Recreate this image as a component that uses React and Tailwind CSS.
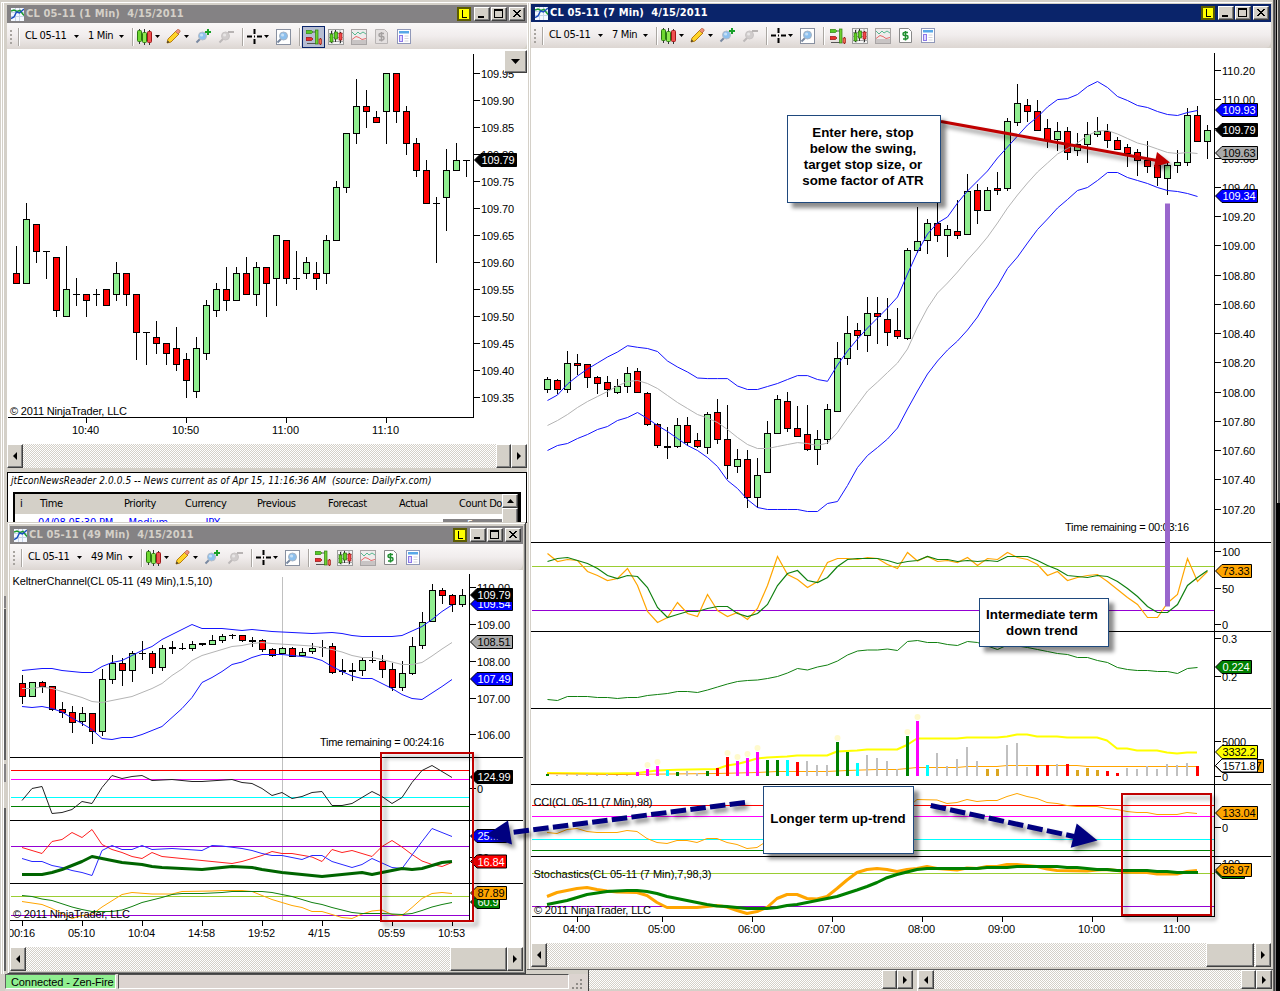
import React from 'react';

const UP = '#90ee90';
const DOWN = '#ff0000';

// [high, body top, body bottom, low, kind]
const CANDLES_1 = [
    [246, 273, 284, 284, 'r'], [203, 219, 284, 284, 'g'], [224, 224, 252, 263, 'r'], [251, 251, 252, 279, 'd'], [257, 257, 311, 317, 'r'],
    [246, 289, 317, 317, 'g'], [278, 294, 295, 306, 'd'], [294, 294, 301, 317, 'r'], [289, 294, 295, 306, 'd'], [289, 289, 306, 306, 'r'],
    [262, 273, 295, 301, 'g'], [273, 273, 295, 306, 'r'], [294, 294, 333, 360, 'r'], [332, 332, 333, 365, 'd'], [321, 337, 344, 354, 'r'],
    [343, 343, 354, 365, 'r'], [327, 348, 365, 371, 'r'], [353, 359, 381, 398, 'r'], [337, 348, 392, 398, 'g'], [300, 305, 354, 360, 'g'],
    [283, 289, 311, 317, 'g'], [267, 289, 301, 311, 'r'], [267, 273, 301, 301, 'g'], [257, 273, 295, 295, 'r'], [262, 267, 295, 306, 'g'],
    [267, 267, 284, 317, 'r'], [235, 235, 279, 306, 'g'], [240, 240, 279, 284, 'r'], [251, 278, 279, 290, 'd'], [257, 262, 274, 279, 'g'],
    [262, 273, 279, 290, 'r'], [235, 240, 274, 284, 'g'], [181, 187, 241, 241, 'g'], [133, 133, 188, 193, 'g'], [79, 106, 134, 144, 'g'],
    [90, 106, 112, 128, 'r'], [111, 117, 123, 123, 'r'], [73, 73, 112, 144, 'g'], [73, 73, 112, 123, 'r'], [106, 111, 144, 155, 'r'],
    [138, 143, 171, 177, 'r'], [160, 170, 204, 204, 'r'], [197, 203, 204, 263, 'd'], [149, 170, 198, 231, 'g'], [143, 160, 171, 171, 'g'],
    [160, 160, 161, 177, 'd'],
];

const CANDLES_7 = [
    [377, 379, 390, 393, 'g'], [379, 380, 390, 394, 'r'], [351, 363, 390, 393, 'g'], [354, 363, 366, 375, 'r'], [364, 364, 378, 388, 'r'],
    [376, 377, 384, 394, 'r'], [376, 382, 390, 397, 'r'], [379, 386, 393, 394, 'g'], [367, 373, 387, 393, 'g'], [368, 371, 393, 393, 'r'],
    [392, 393, 425, 426, 'r'], [423, 424, 446, 448, 'r'], [427, 446, 448, 459, 'd'], [418, 425, 447, 448, 'g'], [417, 425, 443, 446, 'r'],
    [433, 440, 447, 448, 'r'], [412, 414, 448, 454, 'g'], [399, 412, 440, 444, 'r'], [405, 439, 466, 479, 'r'], [449, 459, 467, 473, 'g'],
    [450, 459, 498, 508, 'r'], [458, 475, 498, 508, 'g'], [421, 433, 473, 473, 'g'], [395, 399, 434, 434, 'g'], [392, 401, 429, 432, 'r'],
    [406, 428, 437, 437, 'r'], [405, 434, 450, 451, 'r'], [430, 439, 450, 465, 'g'], [404, 409, 440, 444, 'g'], [342, 358, 412, 412, 'g'],
    [316, 333, 359, 365, 'g'], [323, 330, 336, 350, 'r'], [297, 313, 336, 352, 'g'], [297, 313, 317, 344, 'r'], [298, 319, 333, 346, 'r'],
    [308, 330, 337, 339, 'r'], [248, 250, 339, 340, 'g'], [207, 241, 251, 253, 'g'], [219, 223, 241, 254, 'g'], [195, 223, 236, 242, 'r'],
    [225, 229, 236, 257, 'g'], [200, 231, 236, 239, 'r'], [174, 191, 235, 235, 'g'], [184, 190, 211, 224, 'r'], [187, 190, 211, 211, 'g'],
    [172, 188, 191, 195, 'r'], [118, 121, 189, 191, 'g'], [84, 103, 123, 126, 'g'], [99, 105, 112, 122, 'r'], [100, 111, 131, 131, 'r'],
    [119, 128, 141, 148, 'r'], [122, 131, 140, 151, 'g'], [127, 131, 153, 160, 'r'], [133, 144, 151, 156, 'g'], [122, 134, 145, 163, 'g'],
    [117, 131, 135, 137, 'g'], [124, 131, 141, 148, 'r'], [137, 140, 150, 150, 'r'], [144, 147, 154, 167, 'r'], [149, 152, 161, 176, 'r'],
    [141, 160, 167, 173, 'r'], [165, 165, 178, 186, 'r'], [163, 165, 179, 195, 'g'], [150, 162, 166, 173, 'g'], [108, 115, 163, 166, 'g'],
    [106, 115, 142, 142, 'r'], [125, 130, 142, 159, 'g'],
];

const CANDLES_49 = [
    [675, 683, 697, 704, 'r'], [682, 682, 697, 697, 'g'], [681, 682, 687, 693, 'r'], [686, 686, 710, 711, 'r'], [702, 709, 713, 718, 'r'],
    [706, 712, 723, 733, 'r'], [707, 713, 722, 726, 'g'], [713, 713, 732, 744, 'r'], [669, 679, 732, 736, 'g'], [655, 663, 680, 684, 'g'],
    [658, 663, 671, 686, 'r'], [651, 653, 671, 682, 'g'], [641, 653, 654, 660, 'd'], [651, 653, 668, 674, 'r'], [645, 648, 668, 671, 'g'],
    [641, 647, 649, 654, 'd'], [643, 648, 649, 650, 'd'], [641, 644, 649, 651, 'g'], [643, 643, 645, 646, 'd'], [635, 640, 645, 645, 'g'],
    [634, 636, 641, 643, 'g'], [634, 635, 636, 639, 'd'], [635, 635, 641, 642, 'r'], [637, 640, 642, 647, 'd'], [639, 640, 650, 652, 'r'],
    [648, 649, 656, 657, 'r'], [647, 648, 654, 654, 'g'], [647, 648, 657, 657, 'r'], [648, 652, 656, 656, 'g'], [643, 648, 652, 654, 'g'],
    [640, 647, 648, 657, 'd'], [643, 646, 673, 674, 'r'], [659, 670, 672, 675, 'd'], [663, 670, 672, 681, 'd'], [658, 660, 671, 676, 'g'],
    [651, 660, 661, 663, 'd'], [655, 661, 670, 678, 'r'], [663, 669, 688, 691, 'r'], [661, 673, 688, 691, 'g'], [637, 646, 674, 675, 'g'],
    [612, 622, 646, 649, 'g'], [584, 590, 622, 622, 'g'], [588, 590, 596, 604, 'r'], [594, 595, 605, 612, 'r'], [589, 595, 605, 607, 'g'],
];

const G = '#008000', M = '#ff00ff', C = '#00ffff', R = '#ff0000', S = '#c0c0c0', O = '#daa520';

// [top y, color], one for each bar
const VOLUME = [
    [774, G], [775, S], [774, S], [774, S], [774, S], [775, S], [774, S], [775, S], [775, S], [772, M], [769, M], [766, M], [770, C], [772, G],
    [771, S], [773, S], [771, G], [768, R], [757, R], [761, M], [758, M], [752, M], [760, G], [760, G], [760, C], [762, R], [761, S], [765, S],
    [765, S], [742, G], [752, G], [763, C], [755, S], [758, S], [761, S], [769, S], [736, G], [721, M], [765, C], [753, S], [766, S], [759, S],
    [747, S], [761, S], [769, O], [769, O], [745, S], [743, S], [767, S], [765, R], [765, R], [764, S], [764, R], [770, O], [768, O], [770, O],
    [771, R], [773, R], [768, S], [769, S], [766, S], [769, S], [764, S], [765, S], [763, S], [766, R],
];
const VOLUME_DOTS = [10, 11, 18, 19, 20, 21, 29, 36, 37];

const K7_UP = [400.5, 395, 384, 376, 369, 363, 357, 352, 345.7, 347.3, 348.5, 351.5, 361, 367, 372, 378, 378.6, 378.6, 378.6, 386, 389.5, 389.5, 386.5, 383.5, 379.5, 375.6, 375.6, 379.5, 381.3, 365, 351, 339, 328, 318, 308, 297, 274, 252, 234, 223, 217, 203, 191, 181, 171, 158, 147, 136, 125, 117, 107, 99.6, 98.6, 94.5, 86.5, 81.5, 87.5, 96.5, 100.5, 105.5, 107.5, 111.5, 114.5, 115.5, 112.5, 110.5];
const K7_MID = [425.5, 420.5, 414.5, 407.5, 401.5, 396.5, 391.5, 386, 381.5, 380.5, 383.5, 388.5, 395.5, 402.5, 408.5, 414.5, 418, 422.5, 429.5, 437.5, 444.5, 448.5, 448.5, 446.5, 444.5, 442.6, 443.5, 445.5, 443, 432.5, 418, 404.5, 391, 382, 372.5, 363, 349, 327, 308, 293, 283, 272, 260, 249, 237, 223, 208, 195, 183, 172, 163, 154, 148.5, 143, 135.5, 131, 130.5, 134, 138.5, 143, 145.5, 149, 152.5, 153.5, 152.5, 153.5];
const K7_LOW = [450.5, 445.5, 443.5, 438.5, 434.5, 429.5, 426.5, 420.5, 417.5, 412.5, 418.5, 425.5, 431.5, 438.5, 445.5, 450.5, 457.5, 466.5, 480.5, 488.5, 499.5, 507.5, 509.5, 509.5, 509.5, 509.5, 511.5, 511.5, 503.5, 501.5, 485.5, 467.5, 455.5, 447.5, 439, 428, 409, 391, 374, 361, 350, 341, 330, 317, 300, 286, 268.5, 257, 243, 229.5, 219, 208, 199.5, 190.5, 187.5, 180.5, 172.5, 172.5, 177.5, 180.5, 183.5, 187.5, 190.5, 191.5, 193.5, 196.5];
const ST7_K = [553.5, 561.5, 559.5, 560.5, 571.5, 575.5, 580.5, 578.5, 568.5, 585.5, 611.5, 622.5, 617.5, 602.5, 613.5, 616.5, 594.5, 610.5, 616.5, 612.5, 619.5, 608.5, 585.5, 556.5, 574.5, 579.5, 587.5, 581.5, 562.5, 558.5, 558.5, 559.5, 557.5, 558.5, 564.5, 568.5, 552.5, 561, 556.5, 561.5, 560.5, 562.5, 557.5, 565.5, 558.5, 559.5, 552.5, 557.5, 559.5, 564.5, 575.5, 571.5, 580.5, 577.5, 575.5, 574.5, 581.5, 589.5, 597.5, 604.5, 617.5, 617.5, 603, 594.5, 558.5, 581.5, 571.5];
const ST7_D = [561.5, 558.5, 557.5, 560.5, 563.5, 568.5, 575.5, 578.5, 575.5, 576.5, 587.5, 607.5, 617.5, 614.5, 611.5, 611.5, 608.5, 606.5, 606.5, 613.5, 616.5, 613.5, 604.5, 585.5, 573.5, 570.5, 580.5, 582.5, 577.5, 566.5, 559.5, 558.5, 558.5, 558.5, 560.5, 563.5, 561.5, 560.5, 556.5, 559.5, 559.5, 561.5, 560.5, 561.5, 560.5, 561.5, 556.5, 556.5, 556.5, 560.5, 565.5, 569.5, 575.5, 576.5, 577.5, 575.5, 576.5, 581.5, 588.5, 596.5, 606.5, 612.5, 612.5, 604.5, 585.5, 577.5, 570.5];
const ATR7 = [699.5, 700.5, 696.5, 696.5, 696.5, 697.5, 697.5, 698.5, 697.5, 697.5, 695.5, 694.5, 693.5, 691.5, 691.5, 692.5, 690, 687, 684, 681.5, 680.5, 680, 678.5, 676.5, 673, 668.5, 670, 667, 665, 661, 655, 651, 650, 650, 649, 650.5, 641.5, 640.5, 642.5, 642.5, 644.5, 645.5, 641.5, 642.5, 646, 649.5, 645, 646, 647.5, 649.5, 651.5, 653.5, 654.5, 657.5, 657.5, 660.5, 662.5, 667.5, 669.5, 670.5, 670.5, 671.5, 671.5, 673.5, 668.5, 667.5];

function Candles({ x, data }) {
    return data.map(([hi, top, bottom, lo, kind], i) => {
        const c = x + i * 10;
        return (
            <g key={i} shapeRendering="crispEdges">
                <rect x={c} y={hi} width="1" height={lo - hi} />
                {kind === 'd' ? (
                    <rect x={c - 3} y={top} width="7" height={bottom - top} />
                ) : (
                    <rect x={c - 2.5} y={top + 0.5} width="6" height={bottom - top - 1} fill={kind === 'g' ? UP : DOWN} stroke="#000" />
                )}
            </g>
        );
    });
}

function Series({ x, ys, color, w = 1 }) {
    const points = ys.map((y, i) => `${x + i * 10 + 0.5},${y}`).join(' ');
    return <polyline points={points} fill="none" stroke={color} strokeWidth={w} />;
}

function Poly({ p, color, w = 1 }) {
    return <polyline points={p} fill="none" stroke={color} strokeWidth={w} strokeLinejoin="round" />;
}

function H({ x, to, y, color = '#000' }) {
    return <rect x={x} y={y} width={to - x} height="1" fill={color} shapeRendering="crispEdges" />;
}

function V({ x, y, to, color = '#000' }) {
    return <rect x={x} y={y} width="1" height={to - y} fill={color} shapeRendering="crispEdges" />;
}

// y is the middle of the text
function T({ x, y, w, children, fill = '#000' }) {
    return <text x={x} y={y + 4} textLength={w} fill={fill}>{children}</text>;
}

function Tick({ x, y, children, w }) {
    return (
        <>
            <H x={x} to={x + 6} y={y} />
            <T x={x + 7} y={y + 0.5} w={w}>{children}</T>
        </>
    );
}

function Tag({ x, y, right, fill, color = '#fff', children, w }) {
    return (
        <>
            <polygon points={`${x},${y} ${x + 6.5},${y - 6.5} ${right},${y - 6.5} ${right},${y + 6.5} ${x + 6.5},${y + 6.5}`} fill={fill} stroke="#000" />
            <T x={x + 7} y={y} w={w} fill={color}>{children}</T>
        </>
    );
}

function TimeAxis({ y, items, w = 27 }) {
    return items.map(([x, label]) => (
        <g key={label}>
            <V x={x} y={y} to={y + 6} />
            <T x={x - 14} y={y + 13} w={label.length < 5 ? 22 : w}>{label}</T>
        </g>
    ));
}

function Chart({ box, children }) {
    const [x, y, w, h] = box;
    return (
        <svg className="block shrink-0 bg-white font-['Liberation_Sans',sans-serif] text-[11px]" width={w} height={h} viewBox={`${x} ${y} ${w} ${h}`}>
            {children}
        </svg>
    );
}

function ChartIcon() {
    return (
        <svg width="13" height="13" viewBox="0 0 13 13" className="shrink-0">
            <rect width="13" height="13" fill="#f4f8ff" />
            <path d="M0 4.5h13M0 8.5h13M4.5 0v13M8.5 0v13" stroke="#c8d4e8" />
            <path d="M0 3l3-1 3 1.500 3-1 4 5" stroke="#1a9c30" strokeWidth="1.5" fill="none" />
            <path d="M0 10.500l3-1.500 2.500-5 3 1L13 1" stroke="#1c50c0" strokeWidth="1.5" fill="none" />
        </svg>
    );
}

const raised = 'border border-t-white border-l-white border-r-[#404040] border-b-[#404040] bg-[#d4d0c8] shadow-[inset_-1px_-1px_0_#808080]';

function TitleButton({ children, className = '' }) {
    return (
        <span className={`block h-[14px] w-4 ${raised} ${className}`}>
            <svg width="14" height="12" viewBox="0 0 14 12" shapeRendering="crispEdges">{children}</svg>
        </span>
    );
}

function TitleBar({ title, active }) {
    return (
        <div className={`flex h-[18px] shrink-0 items-center pl-1 pr-0.5 ${active ? 'bg-[#0a246a] text-white' : 'bg-[#848284] text-[#d4d0c8]'}`}>
            <ChartIcon />
            <span className="ml-[2px] whitespace-pre font-['DejaVu_Sans_Condensed','DejaVu_Sans',sans-serif] text-[11px] font-bold leading-[18px] tracking-[0.14px] [font-stretch:condensed]">{title}</span>
            <span className="ml-auto mr-[3px] flex h-[14px] w-[14px] items-center justify-center border-2 border-[#5c5c00] bg-[#ffff00]">
                <svg width="6" height="8" viewBox="0 0 6 8"><path d="M1 0v7.5h5" stroke="#000" fill="none" shapeRendering="crispEdges" /></svg>
            </span>
            <TitleButton><rect x="3" y="8" width="6" height="2" /></TitleButton>
            <TitleButton className="ml-px"><path d="M2.5 1.5h8v8h-8zM2.5 2.5h8" fill="none" stroke="#000" /></TitleButton>
            <TitleButton className="ml-0.5"><path d="M3 2h2v1h1v1h2v-1h1v-1h2v1h-1v1h-1v1h-1v1h1v1h1v1h1v1h-2v-1h-1v-1h-2v1h-1v1h-2v-1h1v-1h1v-1h1v-1h-1v-1h-1v-1h-1z" /></TitleButton>
        </div>
    );
}

function Caret({ className }) {
    return <svg width="5" height="3" viewBox="0 0 5 3" className={`shrink-0 ${className}`}><path d="M0 0h5L2.5 3z" /></svg>;
}

function Sep({ className }) {
    return <span className={`h-[18px] w-0.5 shrink-0 border-l border-[#aaa6a2] border-r border-r-white ${className}`} />;
}

function Lens({ fill, rim, handle }) {
    return (
        <>
            <path d="M5.5 9.5L1.5 13.5" stroke={handle} strokeWidth="2" />
            <circle cx="7.5" cy="7" r="4" fill={fill} stroke={rim} />
            <circle cx="6.6" cy="6" r="1.6" fill="#fff" opacity="0.5" />
        </>
    );
}

function Toolbar({ period, wide, pressed }) {
    return (
        <div className="flex h-[26px] shrink-0 items-center rounded-br-md bg-linear-to-b from-[#faf8f8] via-[#f1eded] to-[#dcd6d2] pt-px font-['DejaVu_Sans_Condensed','DejaVu_Sans',sans-serif] text-[11px] [font-stretch:condensed]">
            <svg width="2" height="14" viewBox="0 0 2 14" className="ml-[3px] shrink-0"><path d="M0 1h2M0 5h2M0 9h2M0 13h2" stroke="#a8a4a0" strokeWidth="2" /></svg>
            <Sep className="ml-[6px]" />
            <span className="ml-[5px] w-[43px] shrink-0 whitespace-nowrap tracking-[-0.35px]">CL 05-11</span>
            <Caret className="ml-[6px]" />
            <span className={`ml-[9px] shrink-0 whitespace-nowrap tracking-[-0.35px] ${wide ? 'w-[31px]' : 'w-[25px]'}`}>{period}</span>
            <Caret className="ml-[6px]" />
            <Sep className="ml-2" />
            <svg width="15" height="16" viewBox="0 0 15 16" className="ml-[3px] shrink-0">
                <path d="M2.5 0v15M7.5 0v16M12.5 1v15" stroke="#333" />
                <rect x="0.5" y="1.5" width="4" height="11" rx="1" fill="#6ed830" stroke="#2c7a12" />
                <rect x="5.5" y="3.5" width="4" height="10" rx="1" fill="#8ee850" stroke="#2c7a12" />
                <rect x="10.5" y="2.5" width="4" height="11" rx="1" fill="#f05050" stroke="#a01818" />
            </svg>
            <Caret className="ml-[3px]" />
            <svg width="15" height="15" viewBox="0 0 15 15" className="ml-[6px] shrink-0">
                <path d="M1 14l1-4 8-8 3 3-8 8z" fill="#ffd428" stroke="#b87c10" />
                <path d="M9.5 2.5l2-2q1-.5 2 .5t.5 2l-2 2z" fill="#f09078" stroke="#b06040" strokeWidth="0.7" />
                <path d="M1 14l.7-2.6 1.8 1.8z" fill="#333" />
            </svg>
            <Caret className="ml-[3px]" />
            <svg width="16" height="16" viewBox="0 0 16 16" className="ml-[6px] shrink-0">
                <Lens fill="#8cc0ee" rim="#b4bcc8" handle="#7888a0" />
                <path d="M13 0v6M10 3h6" stroke="#18a028" strokeWidth="2" />
            </svg>
            <svg width="16" height="16" viewBox="0 0 16 16" className="ml-[7px] shrink-0">
                <Lens fill="#d0cccc" rim="#c8c4c4" handle="#bcb8b8" />
                <path d="M10 3h6" stroke="#b8b4b4" strokeWidth="2" />
            </svg>
            <Sep className="ml-[8px]" />
            <svg width="15" height="15" viewBox="0 0 15 15" className="ml-[3px] shrink-0"><path d="M7.5 0v5M7.5 10v5M0 7.5h5M10 7.5h5M7 7.5h1" stroke="#000" strokeWidth="2" /></svg>
            <Caret className="ml-[2px]" />
            <svg width="15" height="16" viewBox="0 0 15 16" className="ml-[7px] shrink-0">
                <rect x="0.5" y="0.5" width="14" height="15" fill="#fff" stroke="#8890a0" />
                <Lens fill="#8cc0ee" rim="#a8b4c4" handle="#7888a0" />
            </svg>
            <Sep className="ml-[8px]" />
            <span className={`ml-px flex h-[22px] w-[23px] shrink-0 items-center justify-center border ${pressed ? 'border-[#0a246a] bg-[#b6bdd2]' : 'border-transparent'}`}>
                <svg width="16" height="16" viewBox="0 0 16 16">
                    <path d="M0 1.500h5.500l1.500 1.500-1.500 1.500H0z" fill="#58c828" stroke="#2c8010" strokeWidth="0.7" />
                    <path d="M0 8.500h5.500l1.500 1.500-1.500 1.500H0z" fill="#e83030" stroke="#901010" strokeWidth="0.7" />
                    <path d="M7 3h3M1 14.500h9" stroke="#555" />
                    <path d="M14.500 9v7" stroke="#802020" />
                    <rect x="9.500" y="1" width="2.500" height="14" fill="#70d030" stroke="#2c8010" strokeWidth="0.7" />
                    <rect x="13" y="10" width="2.500" height="5" fill="#f07050" stroke="#a02020" strokeWidth="0.7" />
                </svg>
            </span>
            <svg width="16" height="16" viewBox="0 0 16 16" className="ml-[3px] shrink-0">
                <rect x="0.5" y="0.5" width="15" height="15" fill="#f4f4f4" stroke="#9c9c9c" />
                <path d="M0 4.500h16M0 8.500h16M0 12.500h16M4 0v16M12 0v16" stroke="#a8a8a8" />
                <path d="M3.500 2v12M7.500 1v12M12.500 3v11" stroke="#333" />
                <rect x="2" y="5" width="3" height="8" fill="#60d020" stroke="#2c7010" strokeWidth="0.7" />
                <rect x="6.500" y="3" width="3" height="7" fill="#60d020" stroke="#2c7010" strokeWidth="0.7" />
                <rect x="11" y="4" width="3" height="7" fill="#f04848" stroke="#a01818" strokeWidth="0.7" />
            </svg>
            <svg width="16" height="16" viewBox="0 0 16 16" className="ml-[7px] shrink-0">
                <rect x="0.5" y="0.5" width="15" height="15" fill="#eeecec" stroke="#a8a4a4" />
                <path d="M1 11h14v4H1z" fill="#c8c4c4" />
                <path d="M1 3l3 3 3-3 2 2 3-2 3 2" fill="none" stroke="#58b890" />
                <path d="M1 10.500l4-3 3 1 3 2 4-1" fill="none" stroke="#e86868" />
            </svg>
            <svg width="13" height="15" viewBox="0 0 13 15" className="ml-[8px] shrink-0">
                <path d="M.5.500h9l3 3v11H.5z" fill={pressed ? '#e4e0e0' : '#fff'} stroke={pressed ? '#b8b4b4' : '#888'} />
                <path d="M9 4.500H5.500Q4 4.500 4 6t1.500 1.500h2Q9 7.500 9 9.200T7.500 11H4M6.500 3v9.500" fill="none" stroke={pressed ? '#a4a0a0' : '#209030'} strokeWidth="1.5" />
            </svg>
            <svg width="14" height="15" viewBox="0 0 14 15" className="ml-[9px] shrink-0">
                <rect x="0.5" y="0.5" width="13" height="14" fill="#fff" stroke="#9098b8" />
                <rect x="2" y="2" width="10" height="2.500" fill="#58a8e8" />
                <rect x="2.500" y="6.500" width="3" height="6" fill="#e0d8ff" stroke="#8c78e8" />
                <path d="M7.500 7h4M7.500 9.500h4M7.500 12h4" stroke="#d4d4dc" />
            </svg>
        </div>
    );
}

const checker = 'bg-[conic-gradient(#fff_25%,#d4d0c8_0_50%,#fff_0_75%,#d4d0c8_0)] bg-[length:2px_2px]';

function Arrow({ d }) {
    return <svg width="8" height="8" viewBox="0 0 8 8"><path d={d} /></svg>;
}

function ScrollBar({ thumb, gap = '', height = 'h-6' }) {
    return (
        <div className={`flex shrink-0 ${height} ${checker}`}>
            <span className={`flex w-4 items-center justify-center ${raised}`}><Arrow d="M6 0v8L2 4z" /></span>
            <span className={`ml-auto ${thumb} ${raised}`} />
            <span className={`flex w-4 items-center justify-center ${raised} ${gap}`}><Arrow d="M2 0v8L6 4z" /></span>
        </div>
    );
}

function OneMinute() {
    return (
        <div className="absolute left-[7px] top-[5px] flex w-[520px] flex-col">
            <TitleBar title="CL 05-11 (1 Min)  4/15/2011" />
            <Toolbar period="1 Min" pressed />
            <Chart box={[7, 49, 520, 395]}>
                <Candles x={16} data={CANDLES_1} />
                <V x={473} y={54} to={418} />
                <H x={8} to={474} y={417} />
                {['109.95', '109.90', '109.85', '109.80', '109.75', '109.70', '109.65', '109.60', '109.55', '109.50', '109.45', '109.40', '109.35'].map((p, i) => (
                    <Tick key={p} x={474} y={73 + i * 27} w={33}>{p}</Tick>
                ))}
                <Tag x={474.5} y={160} right={516.5} fill="#000" w={33}>109.79</Tag>
                <TimeAxis y={417} items={[[86, '10:40'], [186, '10:50'], [286, '11:00'], [386, '11:10']]} />
                <T x={10} y={411} w={117}>© 2011 NinjaTrader, LLC</T>
            </Chart>
            <ScrollBar thumb="w-[15px]" />
            <span className={`absolute right-0 top-[45px] flex h-[23px] w-[23px] items-center justify-center ${raised}`}>
                <svg width="9" height="5" viewBox="0 0 9 5"><path d="M0 0h9L4.500 5z" /></svg>
            </span>
        </div>
    );
}

function News() {
    return (
        <div className="absolute left-[7px] top-[472px] h-[51px] w-[520px] overflow-hidden border border-black bg-white font-['DejaVu_Sans_Condensed','DejaVu_Sans',sans-serif] text-[11px] [font-stretch:condensed]">
            <p className="h-[19px] whitespace-pre pl-[3px] text-[10px] italic leading-[16px] tracking-[0.06px]">jtEconNewsReader 2.0.0.5 -- News current as of Apr 15, 11:16:36 AM  (source: DailyFx.com)</p>
            <div className="ml-[5px] flex h-10 w-[508px] border-2 border-r-[3px] border-black">
                <div className="flex-1 overflow-hidden">
                    <div className="grid h-5 w-[520px] grid-cols-[20px_84px_61px_72px_71px_71px_60px_81px] items-center whitespace-nowrap bg-[#d4d0c8] pl-[5px] tracking-[-0.4px]">
                        <span>i</span><span>Time</span><span>Priority</span><span>Currency</span><span>Previous</span><span>Forecast</span><span>Actual</span><span>Count Down</span>
                    </div>
                    <div className="flex whitespace-nowrap pt-px text-[#0000ff]">
                        <span className="ml-[23px] w-[93px] tracking-[-0.2px]">04/08 05:30 PM</span>
                        <span className="w-[79px]">Medium</span>
                        <span className="w-[244px]">JPY</span>
                        <span className="mt-1 h-4 w-[60px] bg-[#848284] pl-6 leading-[11px] text-white">5</span>
                    </div>
                </div>
                <div className={`flex w-4 flex-col ${checker}`}>
                    <span className={`flex h-[15px] items-center justify-center ${raised}`}><svg width="7" height="4" viewBox="0 0 7 4"><path d="M0 4h7L3.500 0z" /></svg></span>
                    <span className={`h-6 ${raised}`} />
                </div>
            </div>
        </div>
    );
}

function FortyNineMinute() {
    return (
        <div className="absolute left-[7px] top-[522px] flex w-[519px] flex-col border border-b-[#404040] border-l-[#d4d0c8] border-r-[#404040] border-t-[#d4d0c8] bg-[#d4d0c8] px-0.5 pb-0.5 pt-[3px] shadow-[inset_1px_1px_0_#fff,inset_-1px_-1px_0_#808080]">
            <TitleBar title="CL 05-11 (49 Min)  4/15/2011" />
            <Toolbar period="49 Min" wide />
            <Chart box={[10, 570, 513, 377]}>
                <V x={282} y={577} to={920} color="#c0c0c0" />
                <Candles x={22} data={CANDLES_49} />
                <Poly color="#1414ff" p="22,670.5 32,669.5 42,668.5 52,668.5 62,670.5 72,671.5 82,672.5 92,672.5 102,666.5 112,662.5 122,660.5 132,655.5 142,650.5 152,646.5 162,639.5 172,634.5 182,629.5 192,624.5 202,628.5 222,628.5 232,629.5 242,630.5 252,629.5 262,630.5 272,631.5 312,633.5 332,632.5 342,633.5 352,635.5 362,636.5 392,636.5 402,635.5 412,631 422,626.5 432,619.5 442,611.5 452,605" />
                <Poly color="#b4b4b4" p="22,688.5 32,688.5 42,687 52,688.5 62,691.5 72,694.5 82,697.5 92,701.5 102,702.5 112,700.5 132,696.5 142,692.5 152,688.5 162,683.5 172,675.5 182,669 192,660.5 202,655.5 212,652.5 222,649.5 232,646.5 242,645.5 252,643.5 262,642.5 272,643.5 312,646 322,647.5 332,649.5 342,652 352,655.5 362,657.5 372,657.5 382,659.5 402,664.5 412,664.5 422,662.5 432,656 442,649 452,642.5" />
                <Poly color="#1414ff" p="22,706.5 32,707.5 42,706.5 52,708.5 62,712 72,718 82,723.5 92,729.5 102,738.5 112,739.5 122,737.5 132,737.5 142,734.5 152,730.5 162,726.5 172,717.5 182,708.5 192,697.5 202,682.5 212,677.5 222,671.5 232,664.5 242,662 252,657.5 262,654.5 282,654.5 312,657.5 322,660.5 332,666.5 342,671.5 352,676 362,678.5 372,678.5 382,683.5 392,688.5 402,694.5 412,698.5 422,699.5 432,693 442,686.5 452,679.5" />
                <H x={10} to={523} y={757} />
                <H x={11} to={469} y={770} color="#ff0000" />
                <H x={11} to={469} y={779} color="#ff00ff" />
                <H x={11} to={469} y={797} color="#00ffff" />
                <H x={11} to={469} y={806} color="#008000" />
                <Poly color="#222" p="22,800.5 32,788.5 42,786.5 52,813.5 62,812.5 72,809.5 82,801.5 92,803.5 102,787.5 112,775.5 122,778.5 132,776.5 142,775.5 152,780.5 172,779.5 192,781.5 202,781.5 232,779.5 242,782.5 252,783.5 262,788.5 272,795.5 282,792.5 292,798.5 302,796.5 312,792.5 322,791.5 332,805.5 342,805.5 352,803.5 372,791.5 382,796.5 392,803.5 402,797.5 412,782.5 422,770.5 432,765.5 442,771.5 452,777.5" />
                <H x={10} to={523} y={820} />
                <H x={11} to={469} y={846} color="#9400d3" />
                <Poly color="#ff2020" p="22,847.5 42,853.5 52,841.5 62,839.5 72,832.5 82,837.5 92,829.5 102,844.5 112,849.5 122,852.5 132,856.5 142,858.5 152,852.5 162,856.5 192,859.5 232,863.5 242,861.5 252,858.5 262,855.5 272,851.5 282,853.5 292,853.5 312,857 322,861.5 332,849.5 342,852.5 352,850.5 372,856.5 382,846.5 392,840.5 402,847 412,854.5 422,861 432,864.5 442,866.5 452,862.5" />
                <Poly color="#2828ff" p="22,858.5 32,861.5 42,861.5 52,865.5 62,867.5 72,870.5 82,872.5 92,875.5 102,850.5 112,845.5 122,849.5 132,849.5 142,845.5 152,849.5 172,848.5 202,850.5 212,845.5 222,846 242,848.5 252,850.5 262,853.5 272,855.5 282,855.5 302,859.5 312,855.5 322,855.5 332,861.5 342,864.5 352,867.5 362,864.5 372,858.5 392,867.5 402,868.5 412,855 422,841.5 432,828.5 452,836.5" />
                <Poly color="#006400" w={3} p="22,874.5 42,874.5 52,872.5 62,869.5 82,861.5 92,856.5 102,858.5 122,862.5 142,864.5 152,866.5 162,867.5 182,868.5 202,869.5 222,867.5 232,866.5 252,867.5 262,869.5 282,872.5 302,874.5 322,876.5 342,874.5 362,872.5 372,874.5 392,870.5 402,868.5 412,869.5 422,868.5 432,865.5 442,862.5 452,861.5" />
                <H x={10} to={523} y={883} />
                <H x={11} to={469} y={896} color="#9acd32" />
                <H x={11} to={469} y={915} color="#9400d3" />
                <Poly color="#ffa500" p="22,901.5 42,904.5 52,908.5 62,913.5 72,918.5 82,915.5 92,914.5 102,907 122,894.5 132,892.5 152,894 172,894 182,891.5 212,891 222,890.5 242,890.5 252,891.5 262,895.5 272,899.5 292,905.5 302,907.5 312,911.5 322,911.5 342,917.5 352,918.5 362,914 372,911 382,910 392,914.5 402,915.5 412,907.5 422,898.5 432,893.5 442,892.5 452,893.5" />
                <Poly color="#108010" p="22,895.5 32,896.5 42,899 52,900.5 72,907 82,909.5 92,911.5 112,911.5 122,910 132,906.5 142,902.5 162,897.5 172,894.5 182,893.5 202,893.5 222,892.5 232,891.5 262,891.5 272,892.5 292,896.5 312,902.5 322,904.5 332,907.5 352,912.5 362,913.5 382,913.5 402,914.5 412,913.5 422,910.5 432,907 442,904.5 452,902.5" />
                <V x={469} y={574} to={921} />
                <H x={10} to={470} y={920} />
                <Tick x={470} y={587} w={33}>110.00</Tick>
                <Tick x={470} y={624} w={33}>109.00</Tick>
                <Tick x={470} y={661} w={33}>108.00</Tick>
                <Tick x={470} y={698} w={33}>107.00</Tick>
                <Tick x={470} y={734} w={33}>106.00</Tick>
                <Tick x={470} y={788}>0</Tick>
                <Tick x={470} y={857}>20</Tick>
                <Tag x={470.5} y={604} right={512.5} fill="#0000ff" w={33}>109.54</Tag>
                <Tag x={470.5} y={595} right={512.5} fill="#000" w={33}>109.79</Tag>
                <Tag x={470.5} y={642} right={512.5} fill="#a9a9a9" color="#000" w={33}>108.51</Tag>
                <Tag x={470.5} y={679} right={512.5} fill="#0000ff" w={33}>107.49</Tag>
                <Tag x={470.5} y={777} right={512.5} fill="#000" w={33}>124.99</Tag>
                <Tag x={470.5} y={836} right={506.5} fill="#0000ff">25...</Tag>
                <Tag x={470.5} y={861.5} right={506.5} fill="#ff0000" w={27}>16.84</Tag>
                <Tag x={470.5} y={902} right={499.5} fill="#008000" w={21}>60.9</Tag>
                <Tag x={470.5} y={893} right={506.5} fill="#ffa500" color="#000" w={27}>87.89</Tag>
                <TimeAxis y={920} items={[[22, '00:16'], [82, '05:10'], [142, '10:04'], [202, '14:58'], [262, '19:52'], [322, '4/15'], [392, '05:59'], [452, '10:53']]} />
                <T x={12.5} y={581} w={200}>KeltnerChannel(CL 05-11 (49 Min),1.5,10)</T>
                <T x={320} y={742} w={124}>Time remaining = 00:24:16</T>
                <T x={13} y={914} w={117}>© 2011 NinjaTrader, LLC</T>
            </Chart>
            <ScrollBar thumb="w-[57px]" />
        </div>
    );
}

function SevenMinute() {
    return (
        <div className="absolute left-[531px] top-1 flex w-[740px] flex-col">
            <TitleBar title="CL 05-11 (7 Min)  4/15/2011" active />
            <Toolbar period="7 Min" />
            <Chart box={[531, 48, 740, 895]}>
                <Candles x={547} data={CANDLES_7} />
                <Series x={547} ys={K7_UP} color="#1414ff" />
                <Series x={547} ys={K7_MID} color="#b4b4b4" />
                <Series x={547} ys={K7_LOW} color="#1414ff" />

                <H x={531} to={1271} y={542} />
                <H x={532} to={1214} y={566} color="#9acd32" />
                <H x={532} to={1214} y={610} color="#9400d3" />
                <Series x={547} ys={ST7_K} color="#ffa500" w={1.2} />
                <Series x={547} ys={ST7_D} color="#108010" w={1.2} />

                <H x={531} to={1271} y={631} />
                <Series x={547} ys={ATR7} color="#108010" />

                <H x={531} to={1271} y={708} />
                {VOLUME_DOTS.map(i => <circle key={i} cx={547.5 + i * 10} cy={VOLUME[i][0] - 4} r="3" fill="#fffacd" />)}
                <Poly color="#ffff00" w={2} p="547,773 607,773.5 637,773 657,770.5 677,769.7 717,769 727,765.5 737,764 747,761.5 757,758.5 767,757.5 787,756.500 797,755.5 827,755.5 837,751.5 857,750.5 867,749.5 897,749.5 907,745 917,738.5 957,738.5 967,737.5 997,737.5 1007,736.5 1017,734.5 1027,734.5 1037,736.5 1057,736.5 1067,737.5 1097,737.5 1107,740.5 1117,748.5 1127,748.5 1137,750.5 1157,750.5 1167,752.5 1177,753.5 1187,752.5 1197,752.5" />
                <Poly color="#ffa500" p="547,773.7 617,774.5 717,773.5 757,772.5 777,771.5 827,771.5 847,770.5 877,769.5 897,769.5 907,768.5 917,767.5 957,767.5 967,766.5 997,766.5 1007,765.5 1077,765.5 1087,766.5 1197,766.5" />
                {VOLUME.map(([top, color], i) => (
                    <rect key={i} x={546 + i * 10} y={top} width={color === S ? 2 : 3} height={776 - top} fill={color} shapeRendering="crispEdges" />
                ))}

                <H x={531} to={1271} y={784} />
                <H x={532} to={1214} y={805} color="#ff0000" />
                <H x={532} to={1214} y={816} color="#ff00ff" />
                <H x={532} to={1214} y={839} color="#00ffff" />
                <H x={532} to={1214} y={850} color="#008000" />
                <Poly color="#ffa500" p="547,832.5 557,833.5 567,829.5 577,828.5 587,831.5 597,832.5 617,832.5 627,830.5 637,831.5 647,838.5 657,842.5 667,843.5 677,840.5 687,840.5 697,842.5 707,838.5 717,838.5 727,842.5 737,844.5 747,848.5 757,847.5 767,841 900,808 913,803 917,799.5 937,800 947,803.5 957,802.5 967,799.5 977,801.5 987,800.5 997,800.5 1007,796.5 1017,793.5 1027,796.5 1037,798.5 1047,802.5 1057,803.5 1067,805.5 1077,806.5 1097,806.5 1107,808.5 1117,809.5 1127,811.5 1137,812.5 1147,812.5 1157,814.5 1177,814.5 1187,812.5 1197,813.5" />

                <H x={531} to={1271} y={856} />
                <H x={532} to={1214} y={873} color="#9acd32" />
                <H x={532} to={1214} y={906} color="#9400d3" />
                <Poly color="#ffa500" w={3} p="547,896.5 557,892.5 567,890.5 577,888.5 587,887.5 597,889.5 607,891 617,892 637,892.5 647,895.5 657,902.5 667,907.5 697,907.5 717,905.5 727,907 737,910.5 747,913.5 757,911.5 767,907.5 777,898.5 787,894.5 797,894.5 807,898.5 817,899 827,896.5 837,888.5 847,880 857,872.5 867,869.5 877,868.5 887,869.5 897,871.5 907,869.5 917,868.5 927,866.5 937,868.5 957,870 967,868 977,868.5 987,866.5 997,866.5 1007,864.5 1017,864.5 1037,866.5 1047,869 1057,870.5 1087,871 1097,870 1107,869.5 1117,870.5 1127,872 1147,872.5 1157,874 1177,874 1187,871.5 1197,870.5" />
                <Poly color="#008000" w={3} p="547,904.5 567,900.5 587,894.5 607,891.5 627,890.5 637,890.5 647,891.5 657,893.5 667,896.5 687,900.5 707,904.5 717,906 727,906.5 747,908.5 767,908.5 777,907.5 787,905.5 797,904.5 817,900.5 827,898.5 837,896.5 857,890 867,886.5 877,882.5 887,877.7 897,874.5 907,872 917,869.5 927,868.5 977,868.5 987,867.5 1007,867.5 1017,866.5 1057,866.5 1067,867.5 1077,867.5 1097,869.5 1107,869.5 1117,870.5 1147,870.5 1157,871.5 1167,871.5 1177,872.5 1198,872.500" />

                <V x={1214} y={53} to={917} />
                <H x={532} to={1215} y={916} />
                {['110.20', '110.00', '109.80', '109.60', '109.40', '109.20', '109.00', '108.80', '108.60', '108.40', '108.20', '108.00', '107.80', '107.60', '107.40', '107.20'].map((p, i) => (
                    <Tick key={p} x={1215} y={Math.floor(70.2 + i * 29.27)} w={33}>{p}</Tick>
                ))}
                <Tick x={1215} y={551} w={18}>100</Tick>
                <Tick x={1215} y={588} w={12}>50</Tick>
                <Tick x={1215} y={624}>0</Tick>
                <Tick x={1215} y={638} w={15}>0.3</Tick>
                <Tick x={1215} y={676} w={15}>0.2</Tick>
                <Tick x={1215} y={741} w={24}>5000</Tick>
                <Tick x={1215} y={776}>0</Tick>
                <Tick x={1215} y={827}>0</Tick>
                <Tick x={1215} y={863} w={18}>100</Tick>
                <Tag x={1215.5} y={110} right={1257.5} fill="#0000ff" w={33}>109.93</Tag>
                <Tag x={1215.5} y={130} right={1257.5} fill="#000" w={33}>109.79</Tag>
                <Tag x={1215.5} y={153} right={1257.5} fill="#a9a9a9" color="#000" w={33}>109.63</Tag>
                <Tag x={1215.5} y={196} right={1257.5} fill="#0000ff" w={33}>109.34</Tag>
                <Tag x={1215.5} y={571} right={1251.5} fill="#ffa500" color="#000" w={27}>73.33</Tag>
                <Tag x={1215.5} y={667} right={1251.5} fill="#008000" w={27}>0.224</Tag>
                <Tag x={1215.5} y={766} right={1263.5} fill="#ffa500" color="#000" w={39}>1571.87</Tag>
                <Tag x={1215.5} y={752} right={1257.5} fill="#ffff00" color="#000" w={33}>3332.2</Tag>
                <Tag x={1215.5} y={765.5} right={1257.5} fill="#fff" color="#000" w={33}>1571.8</Tag>
                <Tag x={1215.5} y={813} right={1257.5} fill="#ffa500" color="#000" w={33}>133.04</Tag>
                <Tag x={1215.5} y={872} right={1244.5} fill="#008000" w={21}>85.5</Tag>
                <Tag x={1215.5} y={870} right={1251.5} fill="#ffa500" color="#000" w={27}>86.97</Tag>
                <TimeAxis y={916} items={[[577, '04:00'], [662, '05:00'], [752, '06:00'], [832, '07:00'], [922, '08:00'], [1002, '09:00'], [1092, '10:00'], [1177, '11:00']]} />
                <T x={1065} y={527} w={124}>Time remaining = 00:03:16</T>
                <T x={533.5} y={802} w={119}>CCI(CL 05-11 (7 Min),98)</T>
                <T x={533.5} y={874} w={178}>Stochastics(CL 05-11 (7 Min),7,98,3)</T>
                <T x={534} y={910} w={117}>© 2011 NinjaTrader, LLC</T>
            </Chart>
            <ScrollBar thumb="w-[48px]" gap="ml-px" />
        </div>
    );
}

function StatusBar() {
    return (
        <div className="absolute left-[5px] top-[974px] flex h-[17px] w-[583px] items-start bg-[#dcd4d0] font-['Liberation_Sans',sans-serif] text-[11px]">
            <span className="h-[15px] w-[111px] shrink-0 whitespace-nowrap border border-b-white border-l-[#606060] border-r-white border-t-[#606060] bg-[#90ee90] pl-[5px] leading-[14px] tracking-[-0.1px]">Connected - Zen-Fire</span>
            <span className="ml-0.5 h-[15px] w-[451px] border border-b-white border-l-[#505050] border-r-white border-t-[#505050] bg-[#dcd4d0]" />
            <svg width="12" height="12" viewBox="0 0 12 12" className="ml-[3px] mt-[5px]">
                <path d="M8 1h2M4 5h2M8 5h2M0 9h2M4 9h2M8 9h2" stroke="#908c88" strokeWidth="2" />
            </svg>
        </div>
    );
}

function Callout({ className, children }) {
    return (
        <div className={`absolute flex items-center justify-center whitespace-pre border border-[#1f497d] bg-white text-center font-['Liberation_Sans',sans-serif] text-[13.33px] font-bold leading-4 shadow-[5px_5px_4px_rgba(0,0,0,0.45)] ${className}`}>
            {children}
        </div>
    );
}

function Markup() {
    return (
        <>
            <svg className="absolute left-0 top-0 overflow-visible" width="1280" height="991" viewBox="0 0 1280 991">
                <rect x="1165" y="203.500" width="5" height="403" fill="#9966cc" />
                <g className="drop-shadow-[4px_4px_2px_rgba(0,0,0,0.4)]">
                    <rect x="381" y="753" width="92" height="168" fill="none" stroke="#c00000" strokeWidth="2" />
                    <rect x="1122" y="794" width="89" height="121" fill="none" stroke="#c00000" strokeWidth="2" />
                </g>
                <g className="drop-shadow-[3px_4px_2px_rgba(0,0,0,0.45)]">
                    <path d="M941 121.500L1157 160.500" stroke="#c00000" strokeWidth="3" />
                    <path d="M1157 152L1170 162.500L1154 167z" fill="#c00000" />
                    <path d="M745 802.500L512 832.500" stroke="#000080" strokeWidth="5" strokeDasharray="15.500 4.300" />
                    <path d="M486 835L508 820.500L512 844.500z" fill="#000080" />
                    <path d="M930.700 805.500L1074 836.500" stroke="#000080" strokeWidth="5" strokeDasharray="15.500 4.300" />
                    <path d="M1076.700 823.500L1097.500 840.500L1070.700 847.700z" fill="#000080" />
                </g>
            </svg>
            <Callout className="left-[787px] top-[115px] h-[88px] w-[154px] pb-1 pr-0.5">{'Enter here, stop\nbelow the swing,\ntarget stop size, or\nsome factor of ATR'}</Callout>
            <Callout className="left-[979px] top-[598px] h-[49px] w-[130px] pr-1">{'Intermediate term\ndown trend'}</Callout>
            <Callout className="left-[763px] top-[786px] h-[68px] w-[151px] pb-0.5 pr-px">Longer term up-trend</Callout>
        </>
    );
}

function App() {
    return (
        <div className="relative h-[991px] w-[1280px] overflow-hidden bg-[#d4d0c8] text-black">
            <div className="absolute left-px top-0.5 h-[972px] w-[3px] border-x border-t border-white border-b-0" />
            <div className="absolute left-1 top-[609px] h-[362px] w-0.5 bg-[#606060]" />
            <div className="absolute left-1 top-[760px] h-12 w-0.5 bg-[#d4d0c8]" />
            <div className="absolute left-1 top-[596px] h-3 w-0.5 bg-[#848284]" />
            <div className="absolute left-1 top-[764px] h-[18px] w-0.5 bg-[#848284]" />
            <div className="absolute left-1 top-0.5 h-px w-[1268px] bg-white" />
            <div className="absolute left-[529px] top-0.5 h-[968px] w-px bg-white" />
            <div className="absolute left-[527px] top-0.5 h-[520px] w-px bg-white" />
            <OneMinute />
            <News />
            <FortyNineMinute />
            <SevenMinute />
            <StatusBar />
            <div className="absolute left-[527px] top-[969px] h-px w-[747px] bg-[#606060]" />
            <div className="absolute left-[588px] top-[970px] flex h-[21px] w-[686px] border-l border-[#404040] bg-[#d4d0c8]">
                <div className="w-[324px]"><ScrollBar thumb="w-[15px]" height="h-[19px] pl-0 [&>span:first-child]:invisible" /></div>
                <div className="ml-1 w-[355px] border-l border-white"><ScrollBar thumb="w-[15px]" height="h-[19px]" /></div>
            </div>
            <div className="absolute left-[1273px] top-0 flex h-[991px] w-[7px]">
                <span className="w-px bg-[#606060]" />
                <span className="w-px bg-[#404040]" />
                <span className="w-px bg-[#848284]" />
                <span className="flex-1 bg-black" />
            </div>
            <div className="absolute left-[1277px] top-0 h-[503px] w-[3px] border-l border-[#d4d0c8] bg-[#505050]" />
            <Markup />
        </div>
    );
}

export default App;
